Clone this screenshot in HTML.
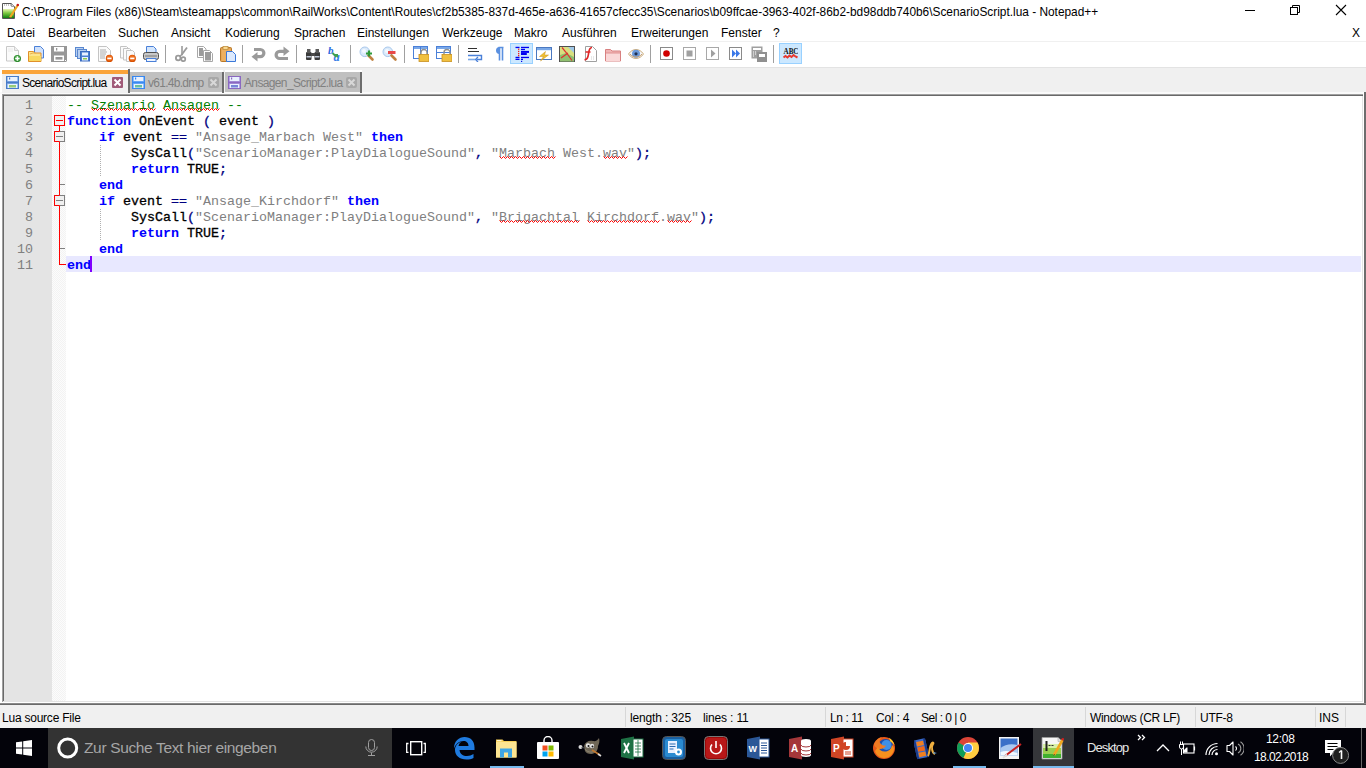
<!DOCTYPE html><html><head><meta charset="utf-8"><style>
*{margin:0;padding:0;box-sizing:border-box}
html,body{width:1366px;height:768px;overflow:hidden;background:#fff;font-family:"Liberation Sans",sans-serif;position:relative}
.a{position:absolute}
.ui{font-size:12px;color:#000;white-space:nowrap;line-height:14px}
.ic{position:absolute;width:16px;height:16px;top:46px}
.tsep{position:absolute;top:45px;width:1px;height:18px;background:#a0a0a0}
.code{position:absolute;left:67px;font-family:"Liberation Mono",monospace;font-size:13.333px;line-height:16px;white-space:pre;color:#000;-webkit-text-stroke:0.3px #000}
.ln{position:absolute;left:4px;width:29px;text-align:right;font-family:"Liberation Mono",monospace;font-size:13.333px;line-height:16px;color:#808080}
.k{color:#0000ff;font-weight:bold;-webkit-text-stroke:0}
.o{color:#000080;-webkit-text-stroke:0.3px #000080}
.s{color:#808080;font-weight:normal;-webkit-text-stroke:0}
.c{color:#008000;font-weight:normal;-webkit-text-stroke:0}
.sp{}
.st{position:absolute;top:711px}
.sdiv{position:absolute;top:707px;width:1px;height:20px;background:#d7d7d7}
.tb{position:absolute;top:728px;height:40px}
</style></head><body>
<div class="a" style="left:0;top:0;width:1366px;height:41px;background:#fff"></div>
<svg class="a" style="left:2px;top:3px" width="17" height="17" viewBox="0 0 17 17">
<defs><linearGradient id="ng" x1="0" y1="0" x2="0" y2="1"><stop offset="0" stop-color="#e8f4b0"/><stop offset="0.45" stop-color="#7cc840"/><stop offset="1" stop-color="#108010"/></linearGradient></defs>
<path d="M0.5 0.5H9.5L12.5 3.5V15.5H0.5z" fill="#fff" stroke="#555"/>
<path d="M9.5 0.5V3.5H12.5" fill="#ddd" stroke="#888" stroke-width="0.8"/>
<path d="M2 2h1M4 2h1M6 2h1M8 2h1" stroke="#888"/>
<rect x="1" y="6" width="11" height="9" fill="url(#ng)"/>
<path d="M8 14.5L15.5 2.5" stroke="#f0a820" stroke-width="2.2"/>
<path d="M7.5 15.5l0.3-1.6 1 0.6z" fill="#333"/>
<circle cx="15.8" cy="2" r="1.3" fill="#c81818"/>
</svg>
<div class="a ui ttl" style="left:22px;top:5px;font-size:11.88px">C:\Program Files (x86)\Steam\steamapps\common\RailWorks\Content\Routes\cf2b5385-837d-465e-a636-41657cfecc35\Scenarios\b09ffcae-3963-402f-86b2-bd98ddb740b6\ScenarioScript.lua - Notepad++</div>
<svg class="a" style="left:1240px;top:0" width="126" height="22">
<line x1="5" y1="10.5" x2="15" y2="10.5" stroke="#000" stroke-width="1"/>
<rect x="50.5" y="7.5" width="7" height="7" fill="none" stroke="#000"/>
<path d="M52.5 7.5 V5.5 H59.5 V12.5 H57.5" fill="none" stroke="#000"/>
<path d="M96 5 L106 15 M106 5 L96 15" stroke="#000" stroke-width="1.1"/>
</svg>
<div class="a ui" style="left:7px;top:26px">Datei</div>
<div class="a ui" style="left:48px;top:26px">Bearbeiten</div>
<div class="a ui" style="left:118px;top:26px">Suchen</div>
<div class="a ui" style="left:171px;top:26px">Ansicht</div>
<div class="a ui" style="left:225px;top:26px">Kodierung</div>
<div class="a ui" style="left:294px;top:26px">Sprachen</div>
<div class="a ui" style="left:357px;top:26px">Einstellungen</div>
<div class="a ui" style="left:442px;top:26px">Werkzeuge</div>
<div class="a ui" style="left:514px;top:26px">Makro</div>
<div class="a ui" style="left:562px;top:26px">Ausführen</div>
<div class="a ui" style="left:631px;top:26px">Erweiterungen</div>
<div class="a ui" style="left:721px;top:26px">Fenster</div>
<div class="a ui" style="left:773px;top:26px">?</div>
<div class="a ui" style="left:1352px;top:26px">X</div>
<div class="a" style="left:0;top:41px;width:1366px;height:1px;background:#f0f0f0"></div>
<div class="a" style="left:0;top:42px;width:1366px;height:25px;background:#fff"></div>
<div class="a" style="left:510px;top:43px;width:23px;height:21px;background:#cce8ff;border:1px solid #99d1ff"></div>
<div class="a" style="left:779px;top:43px;width:23px;height:21px;background:#cce8ff;border:1px solid #99d1ff"></div>
<svg class="ic" style="left:5px" width="16" height="16" viewBox="0 0 16 16"><path d="M1.5 0.5h8l4 4v10.5h-12z" fill="#fbfbfb" stroke="#c8c8c8"/><path d="M9.5 0.5v4h4" fill="#eee" stroke="#d0d0d0"/><path d="M3 3h5M3 5h5" stroke="#eaeaea"/><circle cx="12.4" cy="12.5" r="3.6" fill="#2e8b2e"/><circle cx="12.4" cy="12.2" r="2.6" fill="#4aa84a"/><path d="M12.4 10.3v4.4M10.2 12.5h4.4" stroke="#fff" stroke-width="1.5"/></svg>
<svg class="ic" style="left:28px" width="16" height="16" viewBox="0 0 16 16"><path d="M6.5 0.5h6l3 3v8.5h-9z" fill="#cfe0fa" stroke="#4a80d8"/><path d="M0.5 5.5h5l1 1.5h6.5v8.5h-12.5z" fill="#fde48a" stroke="#e0902a"/><path d="M1 10h12v5h-12z" fill="#f8d860"/><path d="M2 8l3-1h3" stroke="#e8b050" fill="none"/></svg>
<svg class="ic" style="left:51px" width="16" height="16" viewBox="0 0 16 16"><path d="M0 0h16v15l-1 1h-15z" fill="#979797"/><rect x="3" y="1" width="10" height="4.5" fill="#fff"/><rect x="5" y="2" width="1.3" height="2.5" fill="#979797"/><rect x="3" y="9.5" width="10" height="5.5" fill="#fff"/><rect x="4.5" y="11" width="7" height="2.6" fill="#979797"/><rect x="14" y="14" width="1" height="1" fill="#fff"/></svg>
<svg class="ic" style="left:74px" width="16" height="16" viewBox="0 0 16 16"><rect x="1.5" y="1.5" width="8" height="9" fill="#b8cff0" stroke="#5a88d0"/><rect x="3.5" y="3.5" width="9" height="9" fill="#b8cff0" stroke="#5a88d0"/><rect x="6.5" y="5.5" width="9" height="9.5" fill="#4a80d0" stroke="#3a6ac0"/><rect x="8" y="6.5" width="6" height="3" fill="#e8f0ff"/><rect x="8" y="11" width="6" height="3.5" fill="#e8f0ff"/><rect x="9" y="12" width="4" height="1.5" fill="#8cc850"/></svg>
<svg class="ic" style="left:97px" width="16" height="16" viewBox="0 0 16 16"><path d="M1.5 0.5h8l4 4v11h-12z" fill="#fbfbfb" stroke="#c4c4c4"/><path d="M3 4h6M3 6h7M3 8h6M3 10h5M3 12h5" stroke="#8a8a8a" stroke-width="0.7"/><circle cx="12.4" cy="12.4" r="3.6" fill="#d85000"/><circle cx="12.4" cy="12" r="2.8" fill="#f07020"/><path d="M10.3 12.4h4.2" stroke="#fff" stroke-width="1.6"/></svg>
<svg class="ic" style="left:120px" width="16" height="16" viewBox="0 0 16 16"><path d="M0.5 0.5h6l2 2v9.5h-8z" fill="#fbfbfb" stroke="#c4c4c4"/><path d="M3.5 2.5h6l2 2v9.5h-8z" fill="#fbfbfb" stroke="#c4c4c4"/><path d="M6.5 4.5h6l2 2v9h-8z" fill="#fbfbfb" stroke="#c4c4c4"/><circle cx="12.3" cy="12.4" r="3.6" fill="#d85000"/><circle cx="12.3" cy="12" r="2.8" fill="#f07020"/><path d="M10.2 12.4h4.2" stroke="#fff" stroke-width="1.6"/></svg>
<svg class="ic" style="left:143px" width="16" height="16" viewBox="0 0 16 16"><path d="M3.5 0.5h7l2.5 2.5v5h-9.5z" fill="#d4e6fc" stroke="#4a80d8"/><rect x="0.5" y="6.5" width="15" height="7" rx="2" fill="#c8c8c8" stroke="#505050"/><rect x="2" y="9" width="12" height="2" fill="#a0a0a0"/><rect x="3.5" y="12.5" width="9.5" height="3" fill="#eef4ff" stroke="#4a80d8"/></svg>
<svg class="ic" style="left:174px" width="16" height="16" viewBox="0 0 16 16"><path d="M8 0v9" stroke="#9a9a9a" stroke-width="1.6"/><path d="M13 1.5L7.5 9" stroke="#9a9a9a" stroke-width="1.8"/><circle cx="4.2" cy="12" r="2.3" fill="none" stroke="#9a9a9a" stroke-width="1.8"/><circle cx="9.3" cy="13.2" r="2" fill="none" stroke="#9a9a9a" stroke-width="1.7"/><path d="M5.5 10.5l2.5-2" stroke="#9a9a9a" stroke-width="1.6"/></svg>
<svg class="ic" style="left:197px" width="16" height="16" viewBox="0 0 16 16"><path d="M0.5 0.5h6l2.5 2.5v8.5h-8.5z" fill="#fff" stroke="#a8a8a8"/><rect x="2" y="2" width="4" height="8" fill="#9c9c9c"/><path d="M6.5 4.5h6l3 3v8h-9z" fill="#fff" stroke="#a8a8a8"/><rect x="8" y="6" width="6" height="8.5" fill="#9c9c9c"/></svg>
<svg class="ic" style="left:220px" width="16" height="16" viewBox="0 0 16 16"><rect x="0.5" y="1.5" width="11" height="14" rx="1" fill="#e0a050" stroke="#b87828"/><rect x="1.5" y="3" width="9" height="12" fill="#eeb060"/><rect x="3" y="0.5" width="5" height="3" fill="#f8d890" stroke="#c09040" stroke-width="0.8"/><path d="M6.5 5.5h6l3 3v7h-9z" fill="#dce9fd" stroke="#3a78d8"/></svg>
<svg class="ic" style="left:251px" width="16" height="16" viewBox="0 0 16 16"><path d="M3 3.5H9.3a3.6 3.6 0 0 1 0 7.2H6" stroke="#9a9a9a" stroke-width="3.2" fill="none"/><path d="M0.5 10.7L6.5 6V15.4z" fill="#9a9a9a"/></svg>
<svg class="ic" style="left:274px" width="16" height="16" viewBox="0 0 16 16"><path d="M10 5.3H5.7a3.6 3.6 0 0 0 0 7.2H14" stroke="#9a9a9a" stroke-width="3.2" fill="none"/><path d="M15.5 5.3L9.5 0.6V10z" fill="#9a9a9a"/></svg>
<svg class="ic" style="left:305px" width="16" height="16" viewBox="0 0 16 16"><rect x="1" y="6" width="5.5" height="8" rx="1" fill="#3a3a3a"/><rect x="9.5" y="6" width="5.5" height="8" rx="1" fill="#3a3a3a"/><rect x="2" y="3" width="3.5" height="4" fill="#5a5a5a"/><rect x="10.5" y="3" width="3.5" height="4" fill="#5a5a5a"/><rect x="6" y="7" width="4" height="3" fill="#4a4a4a"/><rect x="1.5" y="10" width="4.5" height="1.5" fill="#c0c8d8"/><rect x="10" y="10" width="4.5" height="1.5" fill="#c0c8d8"/></svg>
<svg class="ic" style="left:328px" width="16" height="16" viewBox="0 0 16 16"><text x="0" y="8" font-family="Liberation Serif" font-style="italic" font-weight="bold" font-size="11" fill="#2a6ae0">b</text><text x="5.5" y="15" font-family="Liberation Serif" font-style="italic" font-weight="bold" font-size="12.5" fill="#3a80e8">a</text><path d="M4.5 7l4 4" stroke="#40a050" stroke-width="1.8"/><path d="M10 12v-4h-4z" fill="#40a050"/></svg>
<svg class="ic" style="left:359px" width="16" height="16" viewBox="0 0 16 16"><circle cx="5.8" cy="5.8" r="4.8" fill="#dbeafa" stroke="#a8c8ec"/><circle cx="5" cy="5" r="2" fill="#f4f9ff"/><path d="M9.5 9.5l4 4" stroke="#c08040" stroke-width="2.6" stroke-linecap="round"/><path d="M10 4.5v6M7 7.5h6" stroke="#2f9a3a" stroke-width="2.2"/></svg>
<svg class="ic" style="left:382px" width="16" height="16" viewBox="0 0 16 16"><circle cx="5.8" cy="5.8" r="4.8" fill="#dbeafa" stroke="#a8c8ec"/><circle cx="5" cy="5" r="2" fill="#f4f9ff"/><path d="M9.5 9.5l4 4" stroke="#c08040" stroke-width="2.6" stroke-linecap="round"/><rect x="6" y="5" width="7.5" height="3" fill="#e84848"/></svg>
<svg class="ic" style="left:413px" width="16" height="16" viewBox="0 0 16 16"><rect x="0.5" y="0.5" width="14" height="12" fill="#fff" stroke="#4a80d8"/><rect x="1" y="1" width="13" height="2" fill="#7aa8e8"/><path d="M7.5 1v11" stroke="#4a80d8"/><path d="M8 8.5v-2a3 3 0 0 1 6 0v2" fill="none" stroke="#909090" stroke-width="1.4"/><rect x="6" y="8.5" width="10" height="7" fill="#f0c040" stroke="#c89020" stroke-width="0.8"/></svg>
<svg class="ic" style="left:436px" width="16" height="16" viewBox="0 0 16 16"><rect x="0.5" y="0.5" width="14" height="12" fill="#fff" stroke="#4a80d8"/><rect x="1" y="1" width="13" height="2" fill="#7aa8e8"/><path d="M1 6.5h13" stroke="#4a80d8"/><path d="M8 8.5v-2a3 3 0 0 1 6 0v2" fill="none" stroke="#909090" stroke-width="1.4"/><rect x="6" y="8.5" width="10" height="7" fill="#f0c040" stroke="#c89020" stroke-width="0.8"/></svg>
<svg class="ic" style="left:467px" width="16" height="16" viewBox="0 0 16 16"><path d="M1 2.5h9M1 5.5h11" stroke="#303030" stroke-width="1.2"/><path d="M1 9.5h13.5v4h-5" stroke="#4a80d8" stroke-width="1.4" fill="none"/><path d="M11 11l-2.5 2.5 2.5 2.5" fill="none" stroke="#4a80d8" stroke-width="1.3"/><path d="M1 13.5h7" stroke="#7aa8e8" stroke-width="1.6"/></svg>
<svg class="ic" style="left:490px" width="16" height="16" viewBox="0 0 16 16"><path d="M8.5 1.5h5M9.5 1.5v13M12.5 1.5v13" stroke="#5a90e0" stroke-width="1.6"/><path d="M9.5 1A3.3 3.3 0 0 0 9.5 8z" fill="#5a90e0"/></svg>
<svg class="ic" style="left:513px" width="16" height="16" viewBox="0 0 16 16"><g fill="#0000f0"><rect x="2.5" y="0.8" width="4" height="1.3"/><rect x="2.5" y="10.8" width="4" height="1.3"/><rect x="2.5" y="12.7" width="4" height="1.3"/><rect x="8" y="0.8" width="8.5" height="1.3"/><rect x="8" y="2.8" width="4" height="1.3"/><rect x="8" y="4.9" width="8.5" height="2"/><rect x="8" y="7" width="5.8" height="2"/><rect x="8" y="10.8" width="8.5" height="1.3"/><rect x="8" y="12.7" width="2" height="1.3"/><rect x="8" y="14.8" width="1.2" height="1.2"/></g><g fill="#f02020"><rect x="5" y="2.6" width="1.3" height="1.3"/><rect x="5" y="4.8" width="1.3" height="1.3"/><rect x="5" y="7" width="1.3" height="1.3"/><rect x="5" y="9" width="1.3" height="1.3"/></g></svg>
<svg class="ic" style="left:536px" width="16" height="16" viewBox="0 0 16 16"><rect x="0.5" y="1.5" width="15" height="12" fill="#fff" stroke="#4a78c0"/><rect x="1" y="2" width="14" height="2.2" fill="#7aa8e8"/><path d="M9.5 5.5l-6 5h4l-3 4.5 8-6h-4z" fill="#f0c030" stroke="#c89020" stroke-width="0.5"/></svg>
<svg class="ic" style="left:559px" width="16" height="16" viewBox="0 0 16 16"><rect x="0.5" y="0.5" width="15" height="15" fill="#d8e080" stroke="#505050"/><path d="M1 9l6-2 8 4v4.5h-14z" fill="#90c070"/><path d="M9 1h6v6z" fill="#a0c8e8"/><path d="M3 1.5l5 6 5 7M2 12l7-5" stroke="#e03030" stroke-width="1.2" fill="none"/></svg>
<svg class="ic" style="left:582px" width="16" height="16" viewBox="0 0 16 16"><path d="M3.5 0.5h7l4 4v11h-11z" fill="#fff" stroke="#a0a0a0"/><path d="M10 1.5c-3 0-3 3-3.5 6.5s-1.5 6-4 5.5M3.5 6h5" fill="none" stroke="#e02828" stroke-width="1.7"/><path d="M9 11h4M9 13h4" stroke="#d0d0d0" stroke-dasharray="1,1"/></svg>
<svg class="ic" style="left:605px" width="16" height="16" viewBox="0 0 16 16"><path d="M0.5 3.5h5l1.5 1.5h8.5v10h-15z" fill="#f0b4b4" stroke="#d88080"/><rect x="1" y="7" width="14" height="8" fill="#fad8d8"/><path d="M1 7h14" stroke="#e09090"/></svg>
<svg class="ic" style="left:628px" width="16" height="16" viewBox="0 0 16 16"><path d="M0.5 8c4-6 11-6 15 0c-4 6-11 6-15 0z" fill="#f4f6fa" stroke="#d0b080"/><circle cx="8" cy="7.8" r="4" fill="#6a98d8"/><circle cx="8" cy="7.8" r="1.6" fill="#203050"/><path d="M2 8c3 4 9 4 12 0" stroke="#c8a070" fill="none"/></svg>
<svg class="ic" style="left:659px" width="16" height="16" viewBox="0 0 16 16"><rect x="1.5" y="1.5" width="12" height="12" fill="#fff" stroke="#8a8a8a"/><circle cx="7.5" cy="7.5" r="3.3" fill="#d00000"/></svg>
<svg class="ic" style="left:682px" width="16" height="16" viewBox="0 0 16 16"><rect x="1.5" y="1.5" width="12" height="12" fill="#fff" stroke="#a8a8a8"/><rect x="4.5" y="4.5" width="6" height="6" fill="#a0a0a0"/></svg>
<svg class="ic" style="left:705px" width="16" height="16" viewBox="0 0 16 16"><rect x="1.5" y="1.5" width="12" height="12" fill="#fff" stroke="#a8a8a8"/><path d="M6 3.5l4.5 4-4.5 4z" fill="#a0a0a0"/></svg>
<svg class="ic" style="left:728px" width="16" height="16" viewBox="0 0 16 16"><rect x="1.5" y="1.5" width="12" height="12" fill="#fff" stroke="#8a8a8a"/><path d="M4 3.5l4 4-4 4zM8 3.5l4 4-4 4z" fill="#3a78e8"/></svg>
<svg class="ic" style="left:751px" width="16" height="16" viewBox="0 0 16 16"><rect x="0.5" y="0.5" width="11" height="12" fill="#a0a0a0"/><rect x="2" y="2" width="8" height="2" fill="#fff"/><path d="M2 6h1M4 6h1M2 8h1M4 8h1M2 10h1" stroke="#fff"/><rect x="6" y="6" width="10" height="10" fill="#909090"/><rect x="8" y="8" width="6" height="3" fill="#fff"/></svg>
<svg class="ic" style="left:782px" width="16" height="16" viewBox="0 0 16 16"><text x="1.5" y="7.8" font-family="Liberation Serif" font-weight="bold" font-size="8" fill="#101010" textLength="15" lengthAdjust="spacingAndGlyphs">ABC</text><path d="M1.5 11.5l2-1.5 2 1.5 2-2 2 1.5 2-2 2 1.5 2 1" stroke="#e83a30" stroke-width="2" fill="none"/></svg>
<div class="tsep" style="left:165px"></div>
<div class="tsep" style="left:242px"></div>
<div class="tsep" style="left:296px"></div>
<div class="tsep" style="left:350px"></div>
<div class="tsep" style="left:404px"></div>
<div class="tsep" style="left:458px"></div>
<div class="tsep" style="left:650px"></div>
<div class="tsep" style="left:773px"></div>
<div class="a" style="left:0;top:67px;width:1366px;height:1px;background:#e3e3e3"></div>
<div class="a" style="left:0;top:68px;width:1366px;height:26px;background:#f0f0f0"></div>
<div class="a" style="left:0;top:68px;width:2px;height:26px;background:#fff"></div>
<div class="a" style="left:1px;top:68px;width:128px;height:2px;background:#fff"></div>
<div class="a" style="left:1px;top:68px;width:1px;height:25px;background:#fff"></div>
<div class="a" style="left:130px;top:70px;width:93px;height:2px;background:#fff"></div>
<div class="a" style="left:225px;top:70px;width:137px;height:2px;background:#fff"></div>
<div class="a" style="left:0;top:92px;width:1366px;height:2px;background:#fafafa"></div>
<div class="a" style="left:2px;top:70px;width:126px;height:4px;background:#faa43a"></div>
<div class="a" style="left:2px;top:74px;width:126px;height:19px;background:#f0f0f0"></div>
<div class="a" style="left:128px;top:69px;width:2px;height:24px;background:#6d6d6d"></div>
<div class="a" style="left:6px;top:76px"><svg class="a" width="13" height="13" viewBox="0 0 13 13"><rect x="0.5" y="0.5" width="12" height="12" fill="#9cc0f0" stroke="#4a7cc8"/><rect x="2" y="1" width="9" height="4" fill="#eaf2ff"/><rect x="3" y="1.5" width="1.2" height="2" fill="#4a7cc8"/><rect x="1" y="5.5" width="11" height="2" fill="#4a7cc8"/><rect x="2" y="8" width="9" height="4" fill="#eaf2ff"/><rect x="3" y="9" width="7" height="2.5" fill="#98cc78"/></svg></div>
<div class="a ui" style="left:22px;top:76px;letter-spacing:-0.72px">ScenarioScript.lua</div>
<div class="a" style="left:112px;top:77px;width:11px;height:11px;background:#a05a78;border-radius:1px"><svg width="11" height="11" style="display:block"><path d="M2.5 2.5l6 6M8.5 2.5l-6 6" stroke="#fff" stroke-width="2"/></svg></div>
<div class="a" style="left:130px;top:72px;width:93px;height:20px;background:#c0c0c0"></div>
<div class="a" style="left:222px;top:72px;width:2px;height:21px;background:#6d6d6d"></div>
<div class="a" style="left:132px;top:76px"><svg class="a" width="13" height="13" viewBox="0 0 13 13"><rect x="0.5" y="0.5" width="12" height="12" fill="#8cc0fc" stroke="#3a88f0"/><rect x="2" y="1" width="9" height="4" fill="#eaf2ff"/><rect x="3" y="1.5" width="1.2" height="2" fill="#3a88f0"/><rect x="1" y="5.5" width="11" height="2" fill="#3a88f0"/><rect x="2" y="8" width="9" height="4" fill="#eaf2ff"/><rect x="3" y="9" width="7" height="2.5" fill="#6cc0a0"/></svg></div>
<div class="a ui" style="left:148px;top:76px;color:#808080;letter-spacing:-0.72px">v61.4b.dmp</div>
<div class="a" style="left:208px;top:77px;width:11px;height:11px;background:#a8a8a8;border-radius:2px"><svg width="11" height="11" style="display:block"><path d="M2.5 2.5l6 6M8.5 2.5l-6 6" stroke="#d8d8d8" stroke-width="2"/></svg></div>
<div class="a" style="left:225px;top:72px;width:136px;height:20px;background:#c0c0c0"></div>
<div class="a" style="left:360px;top:72px;width:2px;height:21px;background:#6d6d6d"></div>
<div class="a" style="left:228px;top:76px"><svg class="a" width="13" height="13" viewBox="0 0 13 13"><rect x="0.5" y="0.5" width="12" height="12" fill="#b8a8e8" stroke="#8a68c0"/><rect x="2" y="1" width="9" height="4" fill="#eaf2ff"/><rect x="3" y="1.5" width="1.2" height="2" fill="#8a68c0"/><rect x="1" y="5.5" width="11" height="2" fill="#8a68c0"/><rect x="2" y="8" width="9" height="4" fill="#eaf2ff"/><rect x="3" y="9" width="7" height="2.5" fill="#7888d8"/></svg></div>
<div class="a ui" style="left:244px;top:76px;color:#808080;letter-spacing:-0.64px">Ansagen_Script2.lua</div>
<div class="a" style="left:346px;top:77px;width:11px;height:11px;background:#a8a8a8;border-radius:2px"><svg width="11" height="11" style="display:block"><path d="M2.5 2.5l6 6M8.5 2.5l-6 6" stroke="#d8d8d8" stroke-width="2"/></svg></div>
<div class="a" style="left:2px;top:94px;width:1364px;height:610px;background:#fff"></div>
<div class="a" style="left:2px;top:94px;width:1364px;height:1px;background:#a0a0a0"></div>
<div class="a" style="left:3px;top:95px;width:1363px;height:1px;background:#696969"></div>
<div class="a" style="left:2px;top:94px;width:1px;height:609px;background:#a0a0a0"></div>
<div class="a" style="left:3px;top:95px;width:1px;height:607px;background:#696969"></div>
<div class="a" style="left:1362px;top:96px;width:1px;height:606px;background:#e3e3e3"></div>
<div class="a" style="left:3px;top:701px;width:1360px;height:1px;background:#e3e3e3"></div>
<div class="a" style="left:2px;top:702px;width:1362px;height:1px;background:#fff"></div>
<div class="a" style="left:1363px;top:92px;width:1px;height:611px;background:#fff"></div>
<div class="a" style="left:1364px;top:92px;width:2px;height:611px;background:#6d6d6d"></div>
<div class="a" style="left:0;top:703px;width:1366px;height:1px;background:#8a8a8a"></div>
<div class="a" style="left:0;top:704px;width:1366px;height:1px;background:#6a6a6a"></div>
<div class="a" style="left:4px;top:96px;width:48px;height:605px;background:#e4e4e4"></div>
<div class="a" style="left:52px;top:96px;width:14px;height:605px;background-color:#f3f3f3;background-image:linear-gradient(45deg,#fcfcfc 25%,transparent 25%,transparent 75%,#fcfcfc 75%),linear-gradient(45deg,#fcfcfc 25%,transparent 25%,transparent 75%,#fcfcfc 75%);background-size:2px 2px;background-position:0 0,1px 1px"></div>
<div class="a" style="left:66px;top:256px;width:1295px;height:16px;background:#e8e8ff"></div>
<div class="ln" style="top:98px">1</div>
<div class="code" style="top:98px"><span class="c">-- <span class="sp">Szenario</span> <span class="sp">Ansagen</span> --</span></div>
<div class="ln" style="top:114px">2</div>
<div class="code" style="top:114px"><span class="k">function</span> OnEvent <span class="o">(</span> event <span class="o">)</span></div>
<div class="ln" style="top:130px">3</div>
<div class="code" style="top:130px">    <span class="k">if</span> event <span class="o">==</span> <span class="s">"Ansage_Marbach West"</span> <span class="k">then</span></div>
<div class="ln" style="top:146px">4</div>
<div class="code" style="top:146px">        SysCall<span class="o">(</span><span class="s">"ScenarioManager:PlayDialogueSound"</span><span class="o">,</span> <span class="s">"<span class="sp">Marbach</span> West.<span class="sp">wav</span>"</span><span class="o">);</span></div>
<div class="ln" style="top:162px">5</div>
<div class="code" style="top:162px">        <span class="k">return</span> TRUE<span class="o">;</span></div>
<div class="ln" style="top:178px">6</div>
<div class="code" style="top:178px">    <span class="k">end</span></div>
<div class="ln" style="top:194px">7</div>
<div class="code" style="top:194px">    <span class="k">if</span> event <span class="o">==</span> <span class="s">"Ansage_Kirchdorf"</span> <span class="k">then</span></div>
<div class="ln" style="top:210px">8</div>
<div class="code" style="top:210px">        SysCall<span class="o">(</span><span class="s">"ScenarioManager:PlayDialogueSound"</span><span class="o">,</span> <span class="s">"<span class="sp">Brigachtal</span> <span class="sp">Kirchdorf</span>.<span class="sp">wav</span>"</span><span class="o">);</span></div>
<div class="ln" style="top:226px">9</div>
<div class="code" style="top:226px">        <span class="k">return</span> TRUE<span class="o">;</span></div>
<div class="ln" style="top:242px">10</div>
<div class="code" style="top:242px">    <span class="k">end</span></div>
<div class="ln" style="top:258px">11</div>
<div class="code" style="top:258px"><span class="k">end</span></div>
<svg class="a" style="left:91px;top:108px" width="65" height="4"><polyline points="0.5,0.5 2.5,2.5 4.5,0.5 6.5,2.5 8.5,0.5 10.5,2.5 12.5,0.5 14.5,2.5 16.5,0.5 18.5,2.5 20.5,0.5 22.5,2.5 24.5,0.5 26.5,2.5 28.5,0.5 30.5,2.5 32.5,0.5 34.5,2.5 36.5,0.5 38.5,2.5 40.5,0.5 42.5,2.5 44.5,0.5 46.5,2.5 48.5,0.5 50.5,2.5 52.5,0.5 54.5,2.5 56.5,0.5 58.5,2.5 60.5,0.5 62.5,2.5 64.5,0.5" fill="none" stroke="#ff0000" stroke-width="1"/></svg>
<svg class="a" style="left:163px;top:108px" width="57" height="4"><polyline points="0.5,0.5 2.5,2.5 4.5,0.5 6.5,2.5 8.5,0.5 10.5,2.5 12.5,0.5 14.5,2.5 16.5,0.5 18.5,2.5 20.5,0.5 22.5,2.5 24.5,0.5 26.5,2.5 28.5,0.5 30.5,2.5 32.5,0.5 34.5,2.5 36.5,0.5 38.5,2.5 40.5,0.5 42.5,2.5 44.5,0.5 46.5,2.5 48.5,0.5 50.5,2.5 52.5,0.5 54.5,2.5 56.5,0.5" fill="none" stroke="#ff0000" stroke-width="1"/></svg>
<svg class="a" style="left:499px;top:156px" width="57" height="4"><polyline points="0.5,0.5 2.5,2.5 4.5,0.5 6.5,2.5 8.5,0.5 10.5,2.5 12.5,0.5 14.5,2.5 16.5,0.5 18.5,2.5 20.5,0.5 22.5,2.5 24.5,0.5 26.5,2.5 28.5,0.5 30.5,2.5 32.5,0.5 34.5,2.5 36.5,0.5 38.5,2.5 40.5,0.5 42.5,2.5 44.5,0.5 46.5,2.5 48.5,0.5 50.5,2.5 52.5,0.5 54.5,2.5 56.5,0.5" fill="none" stroke="#ff0000" stroke-width="1"/></svg>
<svg class="a" style="left:603px;top:156px" width="25" height="4"><polyline points="0.5,0.5 2.5,2.5 4.5,0.5 6.5,2.5 8.5,0.5 10.5,2.5 12.5,0.5 14.5,2.5 16.5,0.5 18.5,2.5 20.5,0.5 22.5,2.5 24.5,0.5" fill="none" stroke="#ff0000" stroke-width="1"/></svg>
<svg class="a" style="left:499px;top:220px" width="81" height="4"><polyline points="0.5,0.5 2.5,2.5 4.5,0.5 6.5,2.5 8.5,0.5 10.5,2.5 12.5,0.5 14.5,2.5 16.5,0.5 18.5,2.5 20.5,0.5 22.5,2.5 24.5,0.5 26.5,2.5 28.5,0.5 30.5,2.5 32.5,0.5 34.5,2.5 36.5,0.5 38.5,2.5 40.5,0.5 42.5,2.5 44.5,0.5 46.5,2.5 48.5,0.5 50.5,2.5 52.5,0.5 54.5,2.5 56.5,0.5 58.5,2.5 60.5,0.5 62.5,2.5 64.5,0.5 66.5,2.5 68.5,0.5 70.5,2.5 72.5,0.5 74.5,2.5 76.5,0.5 78.5,2.5 80.5,0.5" fill="none" stroke="#ff0000" stroke-width="1"/></svg>
<svg class="a" style="left:587px;top:220px" width="73" height="4"><polyline points="0.5,0.5 2.5,2.5 4.5,0.5 6.5,2.5 8.5,0.5 10.5,2.5 12.5,0.5 14.5,2.5 16.5,0.5 18.5,2.5 20.5,0.5 22.5,2.5 24.5,0.5 26.5,2.5 28.5,0.5 30.5,2.5 32.5,0.5 34.5,2.5 36.5,0.5 38.5,2.5 40.5,0.5 42.5,2.5 44.5,0.5 46.5,2.5 48.5,0.5 50.5,2.5 52.5,0.5 54.5,2.5 56.5,0.5 58.5,2.5 60.5,0.5 62.5,2.5 64.5,0.5 66.5,2.5 68.5,0.5 70.5,2.5 72.5,0.5" fill="none" stroke="#ff0000" stroke-width="1"/></svg>
<svg class="a" style="left:667px;top:220px" width="25" height="4"><polyline points="0.5,0.5 2.5,2.5 4.5,0.5 6.5,2.5 8.5,0.5 10.5,2.5 12.5,0.5 14.5,2.5 16.5,0.5 18.5,2.5 20.5,0.5 22.5,2.5 24.5,0.5" fill="none" stroke="#ff0000" stroke-width="1"/></svg>
<div class="a" style="left:100px;top:145px;width:1px;height:32px;background-image:linear-gradient(#b0b0b0 50%,transparent 50%);background-size:1px 2px"></div>
<div class="a" style="left:100px;top:209px;width:1px;height:32px;background-image:linear-gradient(#b0b0b0 50%,transparent 50%);background-size:1px 2px"></div>
<div class="a" style="left:90px;top:256px;width:2px;height:16px;background:#8000ff"></div>
<svg class="a" style="left:52px;top:96px" width="14" height="180">
<rect x="2.5" y="19.5" width="10" height="10" fill="#f0f0f0" stroke="#ff0000"/>
<line x1="4" y1="24.5" x2="11" y2="24.5" stroke="#ff0000"/>
<line x1="7.5" y1="30" x2="7.5" y2="35" stroke="#ff0000"/>
<rect x="2.5" y="35.5" width="10" height="10" fill="#f0f0f0" stroke="#808080"/>
<path d="M7.5 35.5H2.5V45.5H7.5" fill="none" stroke="#ff0000"/>
<line x1="4" y1="40.5" x2="11" y2="40.5" stroke="#808080"/>
<line x1="7.5" y1="46" x2="7.5" y2="99" stroke="#ff0000"/>
<line x1="8" y1="88.5" x2="13" y2="88.5" stroke="#808080"/>
<rect x="2.5" y="99.5" width="10" height="10" fill="#f0f0f0" stroke="#808080"/>
<path d="M7.5 99.5H2.5V109.5H7.5" fill="none" stroke="#ff0000"/>
<line x1="4" y1="104.5" x2="11" y2="104.5" stroke="#808080"/>
<line x1="7.5" y1="110" x2="7.5" y2="168.5" stroke="#ff0000"/>
<line x1="8" y1="152.5" x2="13" y2="152.5" stroke="#808080"/>
<line x1="7" y1="168.5" x2="14" y2="168.5" stroke="#ff0000"/>
</svg>
<div class="a" style="left:0;top:705px;width:1366px;height:23px;background:#f0f0f0"></div>
<div class="a ui st" style="left:2px;letter-spacing:-0.23px">Lua source File</div>
<div class="a ui st" style="left:630px;letter-spacing:-0.15px">length : 325</div>
<div class="a ui st" style="left:703px;letter-spacing:-0.16px">lines : 11</div>
<div class="a ui st" style="left:830px;letter-spacing:-0.4px">Ln : 11</div>
<div class="a ui st" style="left:876px;letter-spacing:-0.23px">Col : 4</div>
<div class="a ui st" style="left:921px;letter-spacing:-0.5px">Sel : 0 | 0</div>
<div class="a ui st" style="left:1090px;letter-spacing:-0.31px">Windows (CR LF)</div>
<div class="a ui st" style="left:1200px;letter-spacing:-0.25px">UTF-8</div>
<div class="a ui st" style="left:1319px;letter-spacing:0px">INS</div>
<div class="sdiv" style="left:625px"></div>
<div class="sdiv" style="left:825px"></div>
<div class="sdiv" style="left:1085px"></div>
<div class="sdiv" style="left:1195px"></div>
<div class="sdiv" style="left:1315px"></div>
<div class="sdiv" style="left:1345px"></div>
<div class="a" style="left:0;top:728px;width:1366px;height:40px;background:#03030a"></div>
<div class="a" style="left:48px;top:728px;width:344px;height:40px;background:#333333"></div>
<div class="a" style="left:1033px;top:728px;width:41px;height:40px;background:#35363a"></div>
<svg class="a" style="left:16px;top:740px" width="17" height="17" viewBox="0 0 17 17"><path d="M0 2.3L6.2 1.4V7.4H0z M7.2 1.3L16 0V7.4H7.2z M0 8.4H6.2V14.6L0 13.7z M7.2 8.4H16V16L7.2 14.7z" fill="#fff"/></svg>
<svg class="a" style="left:56px;top:737px" width="24" height="24"><circle cx="11.7" cy="11" r="9" fill="none" stroke="#fff" stroke-width="3"/></svg>
<div class="a" style="left:84px;top:739px;font-size:15.5px;color:#a6a6a6;white-space:nowrap;letter-spacing:-0.35px">Zur Suche Text hier eingeben</div>
<svg class="a" style="left:365px;top:739px" width="13" height="18" viewBox="0 0 13 18"><rect x="3.5" y="0.5" width="6" height="11" rx="3" fill="none" stroke="#a0a0a0"/><path d="M0.8 7.5a5.7 5.7 0 0 0 11.4 0M6.5 13.5v3M3 16.5h7" fill="none" stroke="#a0a0a0"/></svg>
<svg class="a" style="left:405px;top:740px" width="22" height="16" viewBox="0 0 22 16"><rect x="5.7" y="1.7" width="11" height="13" fill="none" stroke="#fff" stroke-width="1.4"/><path d="M3.5 3.5H1.7V12.3H3.5M18.5 3.5H20.3V12.3H18.5" fill="none" stroke="#fff" stroke-width="1.3"/></svg>
<svg class="a" style="left:452px;top:736px" width="24" height="24" viewBox="0 0 24 24"><path d="M2 12.5C2 5 7 1 12.5 1C18.5 1 22.5 5 22.5 11.5V14H7.5C8 18 11 20 15 20C17.5 20 19.5 19.3 21.5 18V22C19.5 23.2 17 23.5 14.5 23.5C7.5 23.5 3 19.5 3 14C3 10 5.5 7 9.5 5.5C7.5 7 6.8 8.7 6.5 10H16.5C16.5 7 14.5 5 11.5 5C7 5 3.5 8 2 12.5z" fill="#1f7be0"/></svg>
<svg class="a" style="left:494px;top:736px" width="24" height="24" viewBox="0 0 24 24"><path d="M2 3.5h6.5l1.5 1.5h12.5v16.5H2z" fill="#f6cf57"/><rect x="2" y="6" width="20.5" height="15.5" rx="0.5" fill="#fde592"/><rect x="3" y="4" width="4.5" height="1.2" fill="#fff6d0"/><path d="M6 12.5h12v9h-4v-5h-4v5H6z" fill="#3ea6e6"/></svg>
<svg class="a" style="left:536px;top:736px" width="24" height="24" viewBox="0 0 24 24"><path d="M8 6V4.5a4 4 0 0 1 8 0V6" fill="none" stroke="#fff" stroke-width="1.4"/><rect x="1" y="6" width="22" height="17" rx="1" fill="#fff"/><rect x="6.5" y="9.5" width="5" height="5" fill="#f25022"/><rect x="12.5" y="9.5" width="5" height="5" fill="#7fba00"/><rect x="6.5" y="15.5" width="5" height="5" fill="#00a4ef"/><rect x="12.5" y="15.5" width="5" height="5" fill="#ffb900"/></svg>
<svg class="a" style="left:578px;top:736px" width="24" height="24" viewBox="0 0 24 24"><path d="M6 10c1-4 5-6 9-5 2 0.5 4 0 6-3 1 3 0 6-1 8 0 4-2 7-6 8-3 0.5-6-1-7-3z" fill="#6f6757"/><path d="M7 13c2 3 6 4 10 2" fill="none" stroke="#8a8270"/><circle cx="10" cy="9.5" r="2.2" fill="#e8e8e8"/><circle cx="14" cy="10" r="2.2" fill="#e8e8e8"/><circle cx="10.5" cy="10" r="1" fill="#111"/><circle cx="14.5" cy="10.5" r="1" fill="#111"/><circle cx="2.5" cy="11" r="2" fill="#d8d8d8"/><path d="M3.5 11.5L7 12" stroke="#555" stroke-width="1"/><path d="M14 14l8 5" stroke="#c07830" stroke-width="1.6"/><path d="M20 18l3 2" stroke="#ddd" stroke-width="1.6"/></svg>
<svg class="a" style="left:620px;top:736px" width="24" height="24" viewBox="0 0 24 24"><path d="M1 3L14 0.5V23.5L1 21z" fill="#1e7145"/><rect x="13" y="3" width="10" height="18" fill="#fff" stroke="#1e7145" stroke-width="1"/><path d="M15 7h6M15 10h6M15 13h6M15 16h6M18 4v16" stroke="#1e7145" stroke-width="0.8"/><path d="M4 7l5 10M9 7l-5 10" stroke="#fff" stroke-width="1.8"/></svg>
<svg class="a" style="left:662px;top:736px" width="24" height="24" viewBox="0 0 24 24"><rect x="0.5" y="0.5" width="23" height="23" rx="4" fill="#1a5fa0" stroke="#555"/><rect x="3" y="3" width="18" height="18" rx="2" fill="#2a8ad0"/><rect x="6" y="5" width="9" height="12" fill="#e8f0ff"/><path d="M7.5 8h6M7.5 10.5h6M7.5 13h4" stroke="#2a6ab0"/><circle cx="16.5" cy="16" r="3.5" fill="#fff"/><circle cx="16.5" cy="16" r="1.4" fill="#2a8ad0"/></svg>
<svg class="a" style="left:704px;top:736px" width="24" height="24" viewBox="0 0 24 24"><rect x="0.5" y="0.5" width="23" height="23" rx="4" fill="#9a0a0a" stroke="#777"/><rect x="2" y="2" width="20" height="20" rx="3" fill="#b81818"/><path d="M8 8.5a5.5 5.5 0 1 0 8 0" fill="none" stroke="#fff" stroke-width="1.6"/><path d="M12 5v7" stroke="#fff" stroke-width="1.6"/></svg>
<svg class="a" style="left:746px;top:736px" width="24" height="24" viewBox="0 0 24 24"><path d="M1 3L14 0.5V23.5L1 21z" fill="#2b5797"/><rect x="13" y="3" width="10" height="18" fill="#fff" stroke="#2b5797"/><path d="M15 7h6M15 9.5h6M15 12h6M15 14.5h6M15 17h6" stroke="#2b5797" stroke-width="1"/><text x="2.5" y="16" font-family="Liberation Sans" font-weight="bold" font-size="9" fill="#fff">W</text></svg>
<svg class="a" style="left:788px;top:736px" width="24" height="24" viewBox="0 0 24 24"><path d="M1 3L14 0.5V23.5L1 21z" fill="#a4373a"/><ellipse cx="18" cy="5" rx="5" ry="2" fill="#fff"/><path d="M13 5v14a5 2 0 0 0 10 0V5" fill="#fff"/><path d="M13 9a5 2 0 0 0 10 0M13 13a5 2 0 0 0 10 0M13 17a5 2 0 0 0 10 0" fill="none" stroke="#a4373a"/><text x="3" y="16" font-family="Liberation Sans" font-weight="bold" font-size="10" fill="#fff">A</text></svg>
<svg class="a" style="left:830px;top:736px" width="24" height="24" viewBox="0 0 24 24"><path d="M1 3L14 0.5V23.5L1 21z" fill="#d04525"/><rect x="13" y="3" width="10" height="18" fill="#fff" stroke="#d04525"/><path d="M16 6a4 4 0 1 0 4 4h-4z" fill="#d04525"/><path d="M15 16h6M15 18h6" stroke="#d04525"/><text x="3" y="16" font-family="Liberation Sans" font-weight="bold" font-size="10" fill="#fff">P</text></svg>
<svg class="a" style="left:872px;top:736px" width="24" height="24" viewBox="0 0 24 24"><circle cx="12" cy="12" r="11" fill="#e8581a"/><circle cx="13.5" cy="10.5" r="7.5" fill="#1c4fb0"/><circle cx="14.5" cy="9" r="5" fill="#3f8fe6"/><path d="M2 9c1-4 4-7 8-8-2 2-3 4-2 6 1.5 2 4 3 6 2.5-1 2.5-4 4-7 3.5-2-0.4-4-2-5-4z" fill="#f07a22"/><path d="M6 11c1 3 4 5 8 4.5 3-0.5 5.5-3 6-6.5 1.5 1 2 3 2 4.5-1 5-5 8.5-10 8.5-4 0-8-3-9-7z" fill="#f6901e"/><path d="M17 1.8c3 1.5 5 4.5 5.5 7.5-1-1.5-2.5-3-4-3.5z" fill="#ffcb2a"/></svg>
<svg class="a" style="left:914px;top:736px" width="24" height="24" viewBox="0 0 24 24"><g transform="rotate(-12 8 12)"><rect x="1" y="3" width="12" height="19" rx="2" fill="#3a6ac8"/><rect x="1" y="3" width="2" height="19" fill="#1a3a88"/><rect x="11" y="3" width="2" height="19" fill="#1a3a88"/><rect x="3.5" y="5" width="7" height="4.5" fill="#f08020"/><rect x="3.5" y="10.5" width="7" height="4.5" fill="#f06818"/><rect x="3.5" y="16" width="7" height="4.5" fill="#f08020"/></g><path d="M14 20c2-3 1-10 4-13 1-1 2 0 1 1-2 3-1 9 2 10" fill="none" stroke="#f0b040" stroke-width="2"/><path d="M19 16l4 1-3 1z" fill="#5090d0"/></svg>
<svg class="a" style="left:956px;top:736px" width="24" height="24" viewBox="0 0 24 24"><circle cx="12" cy="12" r="11" fill="#db4437"/><path d="M12 12L2.5 6.5A11 11 0 0 0 7.5 22z" fill="#0f9d58"/><path d="M12 12L7.5 22A11 11 0 0 0 23 12z" fill="#ffcd40"/><path d="M12 12H23A11 11 0 0 0 21.5 6.5H12z" fill="#ffcd40"/><circle cx="12" cy="12" r="5" fill="#fff"/><circle cx="12" cy="12" r="4" fill="#4285f4"/></svg>
<svg class="a" style="left:998px;top:736px" width="24" height="24" viewBox="0 0 24 24"><rect x="1" y="1" width="20" height="22" fill="#f4f4f4"/><rect x="2.5" y="2.5" width="17" height="17" fill="#3a70c8"/><path d="M2.5 12c4-3 10-5 17-3v10.5h-17z" fill="#a8c8f0"/><path d="M2.5 16c5-2 10-1 17 1v2.5h-17z" fill="#f0f8ff"/><path d="M23 8L7 20" stroke="#c82020" stroke-width="2"/><path d="M9 18.5L5 22" stroke="#e0e0e0" stroke-width="1.8"/></svg>
<svg class="a" style="left:1040px;top:736px" width="24" height="24" viewBox="0 0 24 24"><path d="M2 1.5h16l4 4V23H2z" fill="#f6f6f6" stroke="#9a9a9a" stroke-width="0.8"/><path d="M18 1.5v4h4" fill="#ddd" stroke="#aaa" stroke-width="0.6"/><rect x="3" y="8" width="18" height="14" fill="#9ad050"/><rect x="3" y="8" width="18" height="4" fill="#d8f0a8"/><rect x="3" y="18" width="18" height="4" fill="#40b030"/><rect x="5.5" y="5" width="2" height="10" fill="#202020"/><path d="M8.5 9.5h2M11.5 9.5h2" stroke="#303030" stroke-width="1.2"/><path d="M14 19L22.5 4" stroke="#f0a820" stroke-width="2.6"/><path d="M13.5 20l0.5-2 1 0.6z" fill="#333"/><circle cx="22.8" cy="3.2" r="1.3" fill="#d02020"/></svg>
<div class="a" style="left:490px;top:766px;width:34px;height:2px;background:#76b9ed"></div>
<div class="a" style="left:953px;top:766px;width:33px;height:2px;background:#76b9ed"></div>
<div class="a" style="left:1033px;top:766px;width:41px;height:2px;background:#76b9ed"></div>
<div class="a" style="left:1087px;top:740px;font-size:13px;color:#e6e6e6;white-space:nowrap;letter-spacing:-0.9px">Desktop</div>
<svg class="a" style="left:1137px;top:734px" width="10" height="7"><path d="M1 1l2.5 2.5L1 6M5 1l2.5 2.5L5 6" fill="none" stroke="#fff" stroke-width="1.3"/></svg>
<svg class="a" style="left:1156px;top:743px" width="14" height="9"><path d="M1 8L7 2L13 8" fill="none" stroke="#fff" stroke-width="1.3"/></svg>
<svg class="a" style="left:1178px;top:741px" width="19" height="14" viewBox="0 0 19 14"><path d="M2.5 0.5v3M4.5 0.5v3" stroke="#fff" stroke-width="1"/><path d="M1.5 3.5h4v2.5a2 2 0 0 1-4 0z" fill="none" stroke="#fff"/><path d="M3.5 8v6" stroke="#fff"/><rect x="5.5" y="3" width="10.5" height="9" fill="none" stroke="#fff" stroke-width="1.1"/><path d="M16.5 5.5v4" stroke="#fff" stroke-width="1.2"/><path d="M6 11.5h3.5V6.5h-1L6 9z" fill="#fff"/></svg>
<svg class="a" style="left:1205px;top:742px" width="14" height="14" viewBox="0 0 14 14"><path d="M1 13A11.5 11.5 0 0 1 12.5 1.5M4 13A8.5 8.5 0 0 1 12.5 4.5M7 13A5.5 5.5 0 0 1 12.5 7.5" fill="none" stroke="#fff" stroke-width="1.2"/><circle cx="11.5" cy="11.8" r="1.5" fill="#fff"/></svg>
<svg class="a" style="left:1226px;top:741px" width="18" height="15" viewBox="0 0 18 15"><path d="M1 4.5h2.5L7 1v13L3.5 10.5H1z" fill="none" stroke="#fff" stroke-width="1.1" stroke-linejoin="round"/><path d="M9.5 5.5a2.5 2.5 0 0 1 0 4" fill="none" stroke="#fff" stroke-width="1.1"/><path d="M12 3a5 5 0 0 1 0 9M14.5 0.8a8 8 0 0 1 0 13.4" fill="none" stroke="#9a9a9a" stroke-width="1.1"/></svg>
<div class="a" style="left:1266px;top:732px;font-size:12px;color:#fff;white-space:nowrap;letter-spacing:-0.3px">12:08</div>
<div class="a" style="left:1254px;top:750px;font-size:12px;color:#fff;white-space:nowrap;letter-spacing:-0.6px">18.02.2018</div>
<svg class="a" style="left:1324px;top:739px" width="27" height="27" viewBox="0 0 27 27"><path d="M1 1h16v13h-8l-3 3.5v-3.5H1z" fill="#fff"/><path d="M3.5 4.5h10M3.5 7.5h10M3.5 10.5h6" stroke="#000" stroke-width="1"/><circle cx="16.6" cy="16.4" r="8" fill="#202020" stroke="#888" stroke-width="1"/><path d="M17.5 11.5v8.5" stroke="#fff" stroke-width="1.6"/><path d="M17.5 11.5l-2.5 2" stroke="#fff" stroke-width="1.3"/></svg>
<div class="a" style="left:1361px;top:728px;width:1px;height:40px;background:#666"></div>
</body></html>
